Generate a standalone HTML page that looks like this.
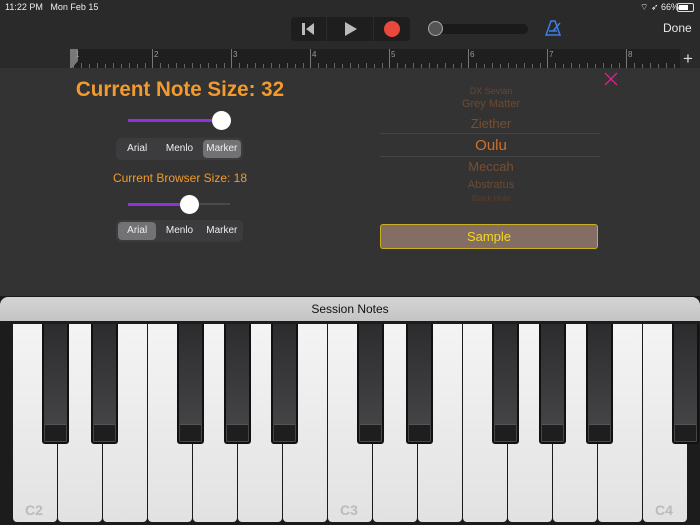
<!DOCTYPE html>
<html><head><meta charset="utf-8"><style>
*{margin:0;padding:0;box-sizing:border-box}
body{width:700px;height:525px;overflow:hidden;background:#2a2a2a;font-family:"Liberation Sans",sans-serif;position:relative}
.a{position:absolute}
.seg{position:absolute;height:22px;width:127px;background:#3c3c3e;border-radius:5px;display:flex;font-size:10px;color:#eee;align-items:center}
.seg div{flex:1;text-align:center;line-height:18px;margin:2px;border-radius:4px}
.seg .on{background:#727275}
.w{position:absolute;top:324px;width:44px;height:198px;background:linear-gradient(#f4f4f4,#e2e2e2);border-radius:0 0 4px 4px}
.b{position:absolute;top:324px;width:27px;height:120px;background:linear-gradient(#2c2c2e,#48484a);border:2px solid #111;border-top:none;border-radius:0 0 3px 3px}
.b:after{content:"";position:absolute;left:1px;right:1px;bottom:1px;height:16px;background:#1e1e1e;border-top:1px solid #555}
.lbl{position:absolute;bottom:4px;left:12px;font-weight:bold;font-size:14px;color:#bbb}
</style></head><body>
<div class="a" style="left:5px;top:2px;font-size:9px;color:#eee">11:22 PM&nbsp;&nbsp; Mon Feb 15</div>
<div class="a" style="left:640px;top:2px;font-size:9px;color:#eee">⌔ ➶ 66%</div>
<div class="a" style="left:677px;top:3px;width:17px;height:9px;border:1px solid #ddd;border-radius:2px"><div style="width:9px;height:5px;margin:1px;background:#fff"></div></div>
<div class="a" style="left:291px;top:17px;width:119px;height:24px;background:#1e1e1e;border-radius:4px"></div>
<div class="a" style="left:326px;top:17px;width:1px;height:24px;background:#2c2c2c"></div>
<div class="a" style="left:373px;top:17px;width:1px;height:24px;background:#2c2c2c"></div>
<svg class="a" style="left:300px;top:21px" width="16" height="16"><rect x="2" y="2" width="3" height="12" fill="#bbb"/><path d="M14 2 L6 8 L14 14Z" fill="#bbb"/></svg>
<svg class="a" style="left:342px;top:21px" width="16" height="16"><path d="M3 1 L15 8 L3 15Z" fill="#bbb"/></svg>
<div class="a" style="left:384px;top:21px;width:16px;height:16px;border-radius:50%;background:#e9483c"></div>
<div class="a" style="left:430px;top:24px;width:98px;height:10px;border-radius:5px;background:#1a1a1a"></div>
<div class="a" style="left:428px;top:21px;width:15px;height:15px;border-radius:50%;background:#555;border:1.5px solid #aaa"></div>
<svg class="a" style="left:545px;top:19px" width="18" height="18"><path d="M6 2 L10 2 L15 16 L1 16Z M4 12 L12 12 M8 12 L15 4" fill="none" stroke="#3a80e6" stroke-width="1.5"/></svg>
<div class="a" style="left:663px;top:21px;font-size:12px;color:#e8e8e8">Done</div>
<div class="a" style="left:70px;top:49px;width:610px;height:19px;background:#1f1f1f"></div>
<svg class="a" style="left:70px;top:49px" width="610" height="19">
<path d="M0 0 H8 V12 L2 19 H0Z" fill="#777"/>
<g stroke="#777" stroke-width="1">
<line x1="3.5" y1="0" x2="3.5" y2="19"/><line x1="82.5" y1="0" x2="82.5" y2="19"/><line x1="161.5" y1="0" x2="161.5" y2="19"/><line x1="240.5" y1="0" x2="240.5" y2="19"/><line x1="319.5" y1="0" x2="319.5" y2="19"/><line x1="398.5" y1="0" x2="398.5" y2="19"/><line x1="477.5" y1="0" x2="477.5" y2="19"/><line x1="556.5" y1="0" x2="556.5" y2="19"/>
</g>
<g stroke="#666" stroke-width="1">
<path d="M11.5 14V19M19.5 15V19M27.5 14V19M35.5 15V19M43.5 14V19M51.5 15V19M59.5 14V19M67.5 15V19M75.5 14V19"/>
<path transform="translate(79 0)" d="M11.5 14V19M19.5 15V19M27.5 14V19M35.5 15V19M43.5 14V19M51.5 15V19M59.5 14V19M67.5 15V19M75.5 14V19"/>
<path transform="translate(158 0)" d="M11.5 14V19M19.5 15V19M27.5 14V19M35.5 15V19M43.5 14V19M51.5 15V19M59.5 14V19M67.5 15V19M75.5 14V19"/>
<path transform="translate(237 0)" d="M11.5 14V19M19.5 15V19M27.5 14V19M35.5 15V19M43.5 14V19M51.5 15V19M59.5 14V19M67.5 15V19M75.5 14V19"/>
<path transform="translate(316 0)" d="M11.5 14V19M19.5 15V19M27.5 14V19M35.5 15V19M43.5 14V19M51.5 15V19M59.5 14V19M67.5 15V19M75.5 14V19"/>
<path transform="translate(395 0)" d="M11.5 14V19M19.5 15V19M27.5 14V19M35.5 15V19M43.5 14V19M51.5 15V19M59.5 14V19M67.5 15V19M75.5 14V19"/>
<path transform="translate(474 0)" d="M11.5 14V19M19.5 15V19M27.5 14V19M35.5 15V19M43.5 14V19M51.5 15V19M59.5 14V19M67.5 15V19M75.5 14V19"/>
<path transform="translate(553 0)" d="M11.5 14V19M19.5 15V19M27.5 14V19M35.5 15V19M43.5 14V19M51.5 15V19"/>
</g>
<g fill="#999" font-size="8" font-family="Liberation Sans"><text x="5" y="8">1</text><text x="84" y="8">2</text><text x="163" y="8">3</text><text x="242" y="8">4</text><text x="321" y="8">5</text><text x="400" y="8">6</text><text x="479" y="8">7</text><text x="558" y="8">8</text></g>
</svg>
<div class="a" style="left:683px;top:49px;font-size:17px;color:#ddd">+</div>
<div class="a" style="left:0;top:68px;width:700px;height:229px;background:#333"></div>
<svg class="a" style="left:604px;top:72px" width="14" height="14"><path d="M1 1L13 13M13 1L1 13" stroke="#e0208a" stroke-width="1.3"/></svg>
<div class="a" style="left:60px;top:78px;width:240px;text-align:center;white-space:nowrap;font-family:'Liberation Sans Narrow','Liberation Sans',sans-serif;font-weight:bold;font-size:21px;color:#f39a2c;transform:scaleX(0.98)">Current Note Size: 32</div>
<div class="a" style="left:128px;top:119px;width:94px;height:3px;background:#9030e0"></div>
<div class="a" style="left:212px;top:111px;width:19px;height:19px;border-radius:50%;background:#fff"></div>
<div class="seg" style="left:116px;top:138px"><div>Arial</div><div>Menlo</div><div class="on">Marker</div></div>
<div class="a" style="left:60px;top:171px;width:240px;text-align:center;font-size:12px;color:#f39a2c">Current Browser Size: 18</div>
<div class="a" style="left:128px;top:203px;width:102px;height:2px;background:#4a4a4a"></div>
<div class="a" style="left:128px;top:203px;width:60px;height:3px;background:#9030e0"></div>
<div class="a" style="left:180px;top:195px;width:19px;height:19px;border-radius:50%;background:#fff"></div>
<div class="seg" style="left:116px;top:220px"><div class="on">Arial</div><div>Menlo</div><div>Marker</div></div>
<div class="a" style="left:380px;top:86px;width:222px;text-align:center;color:#6a4630;font-size:9px;line-height:10px">DX Sevian</div>
<div class="a" style="left:380px;top:98px;width:222px;text-align:center;color:#6e4a30;font-size:11px">Grey Matter</div>
<div class="a" style="left:380px;top:116px;width:222px;text-align:center;color:#7a4e2e;font-size:13px">Ziether</div>
<div class="a" style="left:380px;top:133px;width:220px;height:1px;background:#444"></div>
<div class="a" style="left:380px;top:137px;width:222px;text-align:center;color:#d0702a;font-size:15px">Oulu</div>
<div class="a" style="left:380px;top:156px;width:220px;height:1px;background:#444"></div>
<div class="a" style="left:380px;top:159px;width:222px;text-align:center;color:#7a4e2e;font-size:13px">Meccah</div>
<div class="a" style="left:380px;top:179px;width:222px;text-align:center;color:#6e4a30;font-size:11px">Abstratus</div>
<div class="a" style="left:380px;top:194px;width:222px;text-align:center;color:#5a3e2c;font-size:8px;height:7px;overflow:hidden">Black Hole</div>
<div class="a" style="left:380px;top:224px;width:218px;height:25px;background:#846d64;border:1px solid #c8b020;border-radius:3px;text-align:center;line-height:23px;font-size:13px;color:#f2d820">Sample</div>
<div class="a" style="left:0;top:296px;width:700px;height:30px;background:#1a1a1a"></div>
<div class="a" style="left:0;top:297px;width:700px;height:24px;background:linear-gradient(#d4d4d4,#c4c4c4);border-radius:8px 8px 0 0;text-align:center;line-height:24px;font-size:12px;color:#111">Session Notes</div>
<div class="a" style="left:0;top:321px;width:700px;height:204px;background:#1c1c1c"></div>
<div class="w" style="left:13px"><span class="lbl">C2</span></div>
<div class="w" style="left:58px"></div><div class="w" style="left:103px"></div><div class="w" style="left:148px"></div><div class="w" style="left:193px"></div><div class="w" style="left:238px"></div><div class="w" style="left:283px"></div>
<div class="w" style="left:328px"><span class="lbl">C3</span></div>
<div class="w" style="left:373px"></div><div class="w" style="left:418px"></div><div class="w" style="left:463px"></div><div class="w" style="left:508px"></div><div class="w" style="left:553px"></div><div class="w" style="left:598px"></div>
<div class="w" style="left:643px"><span class="lbl">C4</span></div>
<div class="b" style="left:42px"></div><div class="b" style="left:91px"></div><div class="b" style="left:177px"></div><div class="b" style="left:224px"></div><div class="b" style="left:271px"></div>
<div class="b" style="left:357px"></div><div class="b" style="left:406px"></div><div class="b" style="left:492px"></div><div class="b" style="left:539px"></div><div class="b" style="left:586px"></div>
<div class="b" style="left:672px"></div>
</body></html>
